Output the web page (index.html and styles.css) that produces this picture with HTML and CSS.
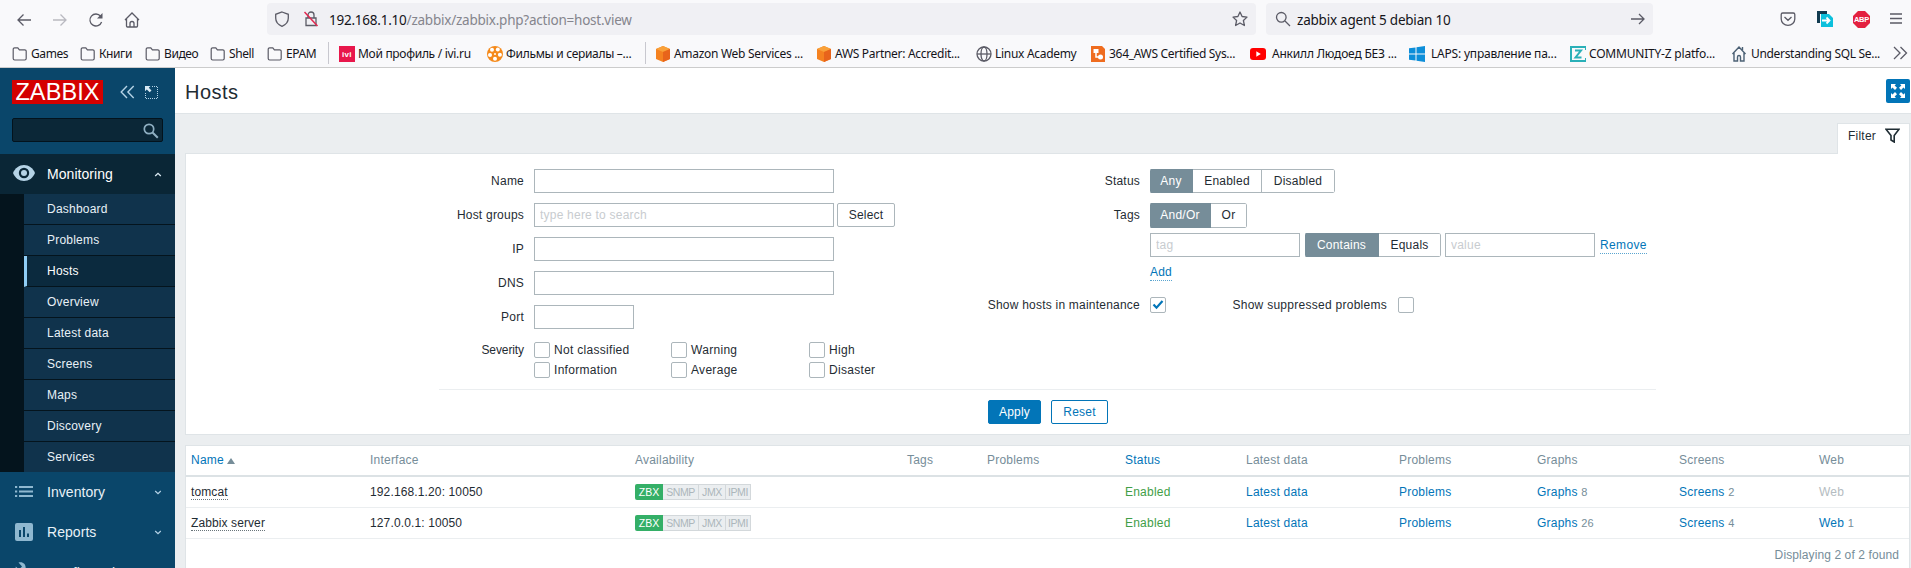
FILE: index.html
```html
<!DOCTYPE html>
<html lang="en">
<head>
<meta charset="utf-8">
<title>Hosts</title>
<link rel="stylesheet" href="styles.css">
</head>
<body>
<svg class="defs" width="0" height="0">
  <symbol id="folder" viewBox="0 0 16 16"><path d="M1.2 12.6V3.2a1.4 1.4 0 0 1 1.4-1.4h3.2l1.6 2h5.4a1.4 1.4 0 0 1 1.4 1.4v7.4a1.4 1.4 0 0 1-1.4 1.4H2.6a1.4 1.4 0 0 1-1.4-1.4z" fill="none" stroke="#5b5b66" stroke-width="1.2"/></symbol>
  <symbol id="cube" viewBox="0 0 16 16"><path d="M8 0l7 3v10l-7 3-7-3V3z" fill="#f58220"/><path d="M8 0l7 3-7 3-7-3z" fill="#f9a13a"/><path d="M8 6l7-3v10l-7 3z" fill="#e8641b"/></symbol>
  <symbol id="down" viewBox="0 0 8 6"><path d="M1.200 2l2.800 2.700L6.800 2" fill="none" stroke="#b5d3e6" stroke-width="1.200"/></symbol>
</svg>
<header class="browser">
  <div class="navbar">
    <div class="nav-icons">
      <svg width="16" height="16" viewBox="0 0 16 16"><path d="M15 8H2M7.5 2.5L2 8l5.500 5.500" class="ln"/></svg>
      <svg width="16" height="16" viewBox="0 0 16 16"><path d="M1 8h13M8.500 2.500L14 8l-5.500 5.500" class="ln dim"/></svg>
      <svg width="16" height="16" viewBox="0 0 16 16"><path d="M13.600 10A6 6 0 1 1 12.600 4.200" class="ln"/><path d="M14.500 1v5.500H9z" fill="#5b5b66"/></svg>
      <svg width="16" height="16" viewBox="0 0 16 16"><path d="M1 8l7-7 7 7M2.500 7v7a1 1 0 0 0 1 1h9a1 1 0 0 0 1-1V7M6 15v-3.500a2 2 0 0 1 4 0V15" class="ln"/></svg>
    </div>
    <div class="urlbar">
      <svg width="16" height="16" viewBox="0 0 16 16"><path d="M8 1l6.300 2.300V7c0 4-3 7-6.300 8.300C4.700 14 1.700 11 1.700 7V3.300z" class="ln"/></svg>
      <svg width="16" height="16" viewBox="0 0 16 16"><path d="M3 7h10v7.500H3zM5 7V4a3 3 0 0 1 6 0v3" class="ln"/><path d="M1.500 1l13 14" stroke="#e22850" stroke-width="1.500"/></svg>
      <span class="url"><b>192.168.1.10</b>/zabbix/zabbix.php?action=host.view</span>
      <svg class="star" width="16" height="16" viewBox="0 0 16 16"><path d="M8 1l2.100 4.500 4.900.6-3.600 3.400 1 5L8 12l-4.400 2.500 1-5L1 6.100l4.900-.6z" class="ln" stroke-linejoin="round"/></svg>
    </div>
    <div class="searchbar">
      <svg width="16" height="16" viewBox="0 0 16 16"><circle cx="6.300" cy="6.300" r="4.800" class="ln"/><path d="M10 10l5 5" class="ln"/></svg>
      <span class="query">zabbix agent 5 debian 10</span>
      <svg class="go" width="16" height="16" viewBox="0 0 16 16"><path d="M1 8h13M9 3l5 5-5 5" class="ln"/></svg>
    </div>
    <div class="tools">
      <svg width="16" height="16" viewBox="0 0 16 16"><path d="M1.200 3.500a1.500 1.500 0 0 1 1.500-1.500h10.600a1.500 1.500 0 0 1 1.500 1.500V8a6.800 6.300 0 0 1-13.600 0zM4.500 6L8 9.300 11.500 6" class="ln"/></svg>
      <svg width="16" height="16" viewBox="0 0 16 16"><path d="M0 0h10v3H3v9H0z" fill="#123b50"/><path d="M4 3h8l4 4v9H4z" fill="#0cc0dc"/><path d="M5 9.500h7M9.500 6.500l3 3-3 3" fill="none" stroke="#fff" stroke-width="1.800"/></svg>
      <svg width="17" height="17" viewBox="0 0 17 17"><path d="M5 0h7l5 5v7l-5 5H5l-5-5V5z" fill="#e3213f"/><text x="8.500" y="11.300" text-anchor="middle" class="abp">ABP</text></svg>
      <svg width="14" height="16" viewBox="0 0 14 16"><path d="M1 3h12M1 7.500h12M1 12h12" class="ln"/></svg>
    </div>
  </div>
  <nav class="bookmarks">
    <a class="bm dir" style="width:68px"><svg><use href="#folder"/></svg>Games</a>
    <a class="bm dir" style="width:65px"><svg><use href="#folder"/></svg>Книги</a>
    <a class="bm dir" style="width:65px"><svg><use href="#folder"/></svg>Видео</a>
    <a class="bm dir" style="width:57px"><svg><use href="#folder"/></svg>Shell</a>
    <a class="bm dir" style="width:61px"><svg><use href="#folder"/></svg>EPAM</a>
    <i class="sep"></i>
    <a class="bm ivibm" style="width:148px"><svg viewBox="0 0 16 16"><path d="M0 0h16v16H0z" fill="#e8174b"/><text x="8" y="10.500" text-anchor="middle" class="ivi">ivi</text></svg>Мой профиль / ivi.ru</a>
    <a class="bm film" style="width:158px"><svg viewBox="0 0 16 16"><circle cx="8" cy="8" r="8" fill="#f58a1b"/><g fill="#fff"><circle cx="5" cy="3.800" r="2"/><circle cx="10.800" cy="3.600" r="2"/><circle cx="3" cy="9" r="2"/><circle cx="12.900" cy="8.700" r="2"/><circle cx="8" cy="12.800" r="2"/><circle cx="8" cy="8" r="1"/></g></svg>Фильмы и сериалы –...</a>
    <i class="sep"></i>
    <a class="bm" style="width:161px"><svg><use href="#cube"/></svg>Amazon Web Services ...</a>
    <a class="bm" style="width:160px"><svg><use href="#cube"/></svg>AWS Partner: Accredit...</a>
    <a class="bm" style="width:114px"><svg viewBox="0 0 16 16"><circle cx="8" cy="8" r="7" class="ln"/><ellipse cx="8" cy="8" rx="3" ry="7" class="ln"/><path d="M1 8h14" class="ln"/></svg>Linux Academy</a>
    <a class="bm loose" style="width:160px"><svg viewBox="0 0 16 16"><path d="M1 0h11l3 3v13H1z" fill="#ef6c1f"/><path d="M3.500 3h5v4h-5z" fill="#fff"/><path d="M6 7v4h3" fill="none" stroke="#fff" stroke-width="1.500"/><circle cx="10.500" cy="11" r="2.500" fill="#fff"/></svg>364_AWS Certified Sys...</a>
    <a class="bm yt" style="width:159px"><svg viewBox="0 0 16 16"><rect y="2" width="16" height="12" rx="3" fill="#f00"/><path d="M6.300 5.200l4.500 2.800-4.500 2.800z" fill="#fff"/></svg>Анкилл Людоед БЕЗ ...</a>
    <a class="bm win" style="width:161px"><svg viewBox="0 0 16 16"><path d="M0 2.300l6.500-.9v6.100H0zM7.500 1.200L16 0v7.500H7.500zM0 8.500h6.500v6.100L0 13.700zM7.500 8.500H16V16l-8.500-1.200z" fill="#0d8ed9"/></svg>LAPS: управление па...</a>
    <a class="bm comm" style="width:161px"><svg viewBox="0 0 16 16"><path d="M16 4V1H1v14h15v-3" fill="none" stroke="#2ab0b8" stroke-width="2"/><path d="M5 4.500h6L5.500 11.500H11.500" fill="none" stroke="#2ab0b8" stroke-width="2"/></svg>COMMUNITY-Z platfo...</a>
    <a class="bm und" style="width:162px"><svg viewBox="0 0 16 16"><path d="M1.500 8L8 1l6.500 7M3 7v8h3.500v-4a1.500 1.500 0 0 1 3 0v4H13V7M11.500 4V1" fill="none" stroke="#4c6175" stroke-width="1.400"/></svg>Understanding SQL Se...</a>
    <svg class="more" width="15" height="14" viewBox="0 0 15 14"><path d="M1 1l6 6-6 6M7.500 1l6 6-6 6" class="ln"/></svg>
  </nav>
</header>

<div class="app">
  <aside class="sidebar">
    <div class="brand">
      <span class="logo">ZABBIX</span>
      <svg class="collapse" width="15" height="14" viewBox="0 0 15 14"><path d="M7 1L1.200 7 7 13M13.700 1L7.900 7l5.800 6" fill="none" stroke="#b5d3e6" stroke-width="1.400"/></svg>
      <svg class="kiosk" width="13" height="13" viewBox="0 0 13 13"><path d="M7 .5h5.500v12H.5V6" fill="none" stroke="#b5d3e6" stroke-dasharray="1 1"/><path d="M0 0h5.500L3.800 1.700 6.500 4.500l-1.800 1.800L1.800 3.500 0 5.300z" fill="#d8e9f4"/></svg>
    </div>
    <div class="side-search"><svg width="16" height="16" viewBox="0 0 16 16"><circle cx="6" cy="6" r="4.700" fill="none" stroke="#8fafc2" stroke-width="1.700"/><path d="M9.500 9.500l5.300 5.300" stroke="#8fafc2" stroke-width="2"/></svg></div>
    <div class="menu-head open">
      <svg class="mi eye" width="22" height="16" viewBox="0 0 22 16"><path d="M0 8C2 3 6.200 0 11 0s9 3 11 8c-2 5-6.200 8-11 8S2 13 0 8z" fill="#b5d3e6"/><circle cx="11" cy="8" r="5.200" fill="#0a2636"/><circle cx="11" cy="8" r="3" fill="#b5d3e6"/></svg>
      <span>Monitoring</span>
      <svg class="chev" width="8" height="6" viewBox="0 0 8 6"><path d="M1.200 5L4 2.300 6.800 5" fill="none" stroke="#dcebf5" stroke-width="1.300"/></svg>
    </div>
    <ul class="submenu">
      <li>Dashboard</li><li>Problems</li><li class="active">Hosts</li><li>Overview</li><li>Latest data</li><li>Screens</li><li>Maps</li><li>Discovery</li><li>Services</li>
    </ul>
    <div class="menu-head"><svg class="mi" width="18" height="18" viewBox="0 0 18 18"><path d="M0 4h2.200M4 4h14M0 8.500h2.200M4 8.500h14M0 13h2.200M4 13h14" stroke="#8fb8d0" stroke-width="1.900"/></svg><span>Inventory</span><svg class="chev" width="8" height="6"><use href="#down"/></svg></div>
    <div class="menu-head"><svg class="mi" width="18" height="18" viewBox="0 0 18 18"><rect width="18" height="18" rx="2" fill="#8fb8d0"/><path d="M5 7v7M9 4v10M13 10.500V14" stroke="#0a466a" stroke-width="2"/></svg><span>Reports</span><svg class="chev" width="8" height="6"><use href="#down"/></svg></div>
    <div class="menu-head last"><svg class="mi" width="18" height="20" viewBox="0 0 18 20"><path d="M3.500.5c4.500-1.500 8 2 7 6.500L18 15l-3 3-7.500-8C3 11 0 8 .8 4.500l3.200 3L7 4.500z" fill="#8fb8d0"/></svg><span>Configuration</span><svg class="chev" width="8" height="6"><use href="#down"/></svg></div>
  </aside>

  <main class="main">
    <div class="title-row">
      <h1>Hosts</h1>
      <button class="fullscreen"><svg width="14" height="14" viewBox="0 0 14 14"><path d="M0 0h5L3.600 1.400 6 3.800 4 6 1.500 3.500 0 5zM14 0v5l-1.500-1.500L10 6 8 3.800l2.400-2.400L9 0zM0 14V9l1.500 1.500L4 8l2 2.200-2.400 2.400L5 14zM14 14H9l1.400-1.400L8 10.200 10 8l2.500 2.500L14 9z" fill="#fff"/></svg></button>
    </div>
    <div class="content">
      <div class="tabs"><div class="tab">Filter<svg width="15" height="15" viewBox="0 0 15 15"><path d="M1 1.200h13L9.200 7.500V14L6 12V7.500z" fill="none" stroke="#1f2c33" stroke-width="1.600"/></svg></div></div>
      <section class="filter">
        <div class="fields">
          <div class="col-left">
            <div class="row"><label>Name</label><input class="w300"></div>
            <div class="row"><label>Host groups</label><input class="w300" placeholder="type here to search"><button class="btn select">Select</button></div>
            <div class="row"><label>IP</label><input class="w300"></div>
            <div class="row"><label>DNS</label><input class="w300"></div>
            <div class="row"><label>Port</label><input class="w100"></div>
            <div class="row sev"><label>Severity</label>
              <div class="checks">
                <span><i class="cb"></i>Not classified</span><span><i class="cb"></i>Warning</span><span><i class="cb"></i>High</span>
                <span><i class="cb"></i>Information</span><span><i class="cb"></i>Average</span><span><i class="cb"></i>Disaster</span>
              </div>
            </div>
          </div>
          <div class="col-right">
            <div class="row"><label>Status</label><div class="seg"><b style="width:43px">Any</b><span style="width:69px">Enabled</span><span style="width:73px">Disabled</span></div></div>
            <div class="row tags"><label>Tags</label><div class="seg tall"><b style="width:61px">And/Or</b><span style="width:36px">Or</span></div></div>
            <div class="row tagline"><label></label><input class="w150" placeholder="tag"><div class="seg op"><b style="width:74px">Contains</b><span style="width:62px">Equals</span></div><input class="w150" placeholder="value"><a class="dot">Remove</a></div>
            <div class="row addline"><label></label><a class="dot">Add</a></div>
            <div class="row maint"><label>Show hosts in maintenance</label><i class="cb"><svg width="12" height="10" viewBox="0 0 12 10"><path d="M1.500 4.500l3 3.200L10.500 1" fill="none" stroke="#0275b8" stroke-width="2.200"/></svg></i><span class="supp">Show suppressed problems</span><i class="cb"></i></div>
          </div>
        </div>
        <div class="actions"><button class="btn apply">Apply</button><button class="btn reset">Reset</button></div>
      </section>
      <section class="hosts">
        <div class="tr th"><span class="blue">Name <i class="asc"></i></span><span>Interface</span><span>Availability</span><span>Tags</span><span>Problems</span><span class="blue">Status</span><span>Latest data</span><span>Problems</span><span>Graphs</span><span>Screens</span><span>Web</span></div>
        <div class="tr"><span><a class="host">tomcat</a></span><span class="ip">192.168.1.20: 10050</span><span class="avail"><b>ZBX</b><i class="a2">SNMP</i><i class="a3">JMX</i><i class="a4">IPMI</i></span><span></span><span></span><span class="green">Enabled</span><span class="blue">Latest data</span><span class="blue">Problems</span><span class="blue">Graphs <em>8</em></span><span class="blue">Screens <em>2</em></span><span class="off">Web</span></div>
        <div class="tr"><span><a class="host">Zabbix server</a></span><span class="ip">127.0.0.1: 10050</span><span class="avail"><b>ZBX</b><i class="a2">SNMP</i><i class="a3">JMX</i><i class="a4">IPMI</i></span><span></span><span></span><span class="green">Enabled</span><span class="blue">Latest data</span><span class="blue">Problems</span><span class="blue">Graphs <em>26</em></span><span class="blue">Screens <em>4</em></span><span class="blue">Web <em>1</em></span></div>
        <div class="found">Displaying 2 of 2 found</div>
      </section>
    </div>
  </main>
</div>
</body>
</html>
```
FILE: styles.css
```css
* { box-sizing: border-box; }
html, body { margin: 0; height: 568px; overflow: hidden; }
body { font: 12px/16px "Liberation Sans", Arial, sans-serif; letter-spacing: .22px; color: #1f2c33; background: #ebeef0; }
.defs { display: none; }
svg { flex: none; }
.ln { fill: none; stroke: #5b5b66; stroke-width: 1.3; }
.dim { stroke: #b9b9c0; }

/* Browser chrome */
.browser { height: 68px; background: #f9f9fb; border-bottom: 1px solid #ccc; font-family: "Noto Sans", "Open Sans", sans-serif; color: #15141a; }
.navbar { display: flex; height: 39px; align-items: flex-start; padding-top: 3px; }
.nav-icons { display: flex; gap: 20px; padding: 9px 0 0 16px; width: 267px; }
.urlbar { display: flex; align-items: center; width: 989px; height: 32px; background: #f0f0f4; border-radius: 4px; padding: 0 8px 0 7px; gap: 13px; }
.url { font-size: 13.500px; letter-spacing: -.23px; color: #85858d; margin: 2px 0 0 -3px; white-space: nowrap; }
.url b { font-weight: 400; color: #15141a; }
.star { margin-left: auto; }
.searchbar { display: flex; align-items: center; width: 387px; height: 32px; margin-left: 10px; background: #f0f0f4; border-radius: 4px; padding: 0 7px 0 9px; }
.query { font-size: 13.500px; letter-spacing: -.22px; margin: 2px 0 0 6px; white-space: nowrap; }
.go { margin-left: auto; }
.tools { display: flex; align-items: center; height: 32px; gap: 20px; margin-left: 127px; }
.tools svg:nth-child(2) { margin-left: 1px; }
.tools svg:nth-child(4) { margin-left: -1px; }
.abp { font: 700 7.500px "Liberation Sans", sans-serif; fill: #fff; letter-spacing: -.2px; }
.ivi { font: 700 8px "Liberation Sans", sans-serif; fill: #fff; letter-spacing: .3px; }
.bookmarks { display: flex; align-items: center; height: 28px; padding-left: 12px; }
.bm { display: flex; align-items: center; flex: none; gap: 4px; font-size: 12px; letter-spacing: -.3px; white-space: nowrap; padding-top: 1px; }
.bm svg { width: 16px; height: 16px; margin-right: -1px; }
.dir { letter-spacing: -.4px; }
.yt, .win { letter-spacing: -.2px; }
.yt svg, .win svg { margin-right: 2px; }
.comm { letter-spacing: -.2px; }
.und { letter-spacing: -.32px; }
.und svg { margin-right: 0; }
.sep { width: 1px; height: 22px; background: #c8c8cf; flex: none; margin-right: 9px; }
.sep + .ivibm { margin-left: 1px; }

/* Sidebar */
.app { display: flex; height: 500px; }
.sidebar { width: 175px; flex: none; background: #0a466a; color: #e8f1f7; overflow: hidden; }
.brand { display: flex; height: 50px; padding: 12px 0 0 12px; }
.logo { width: 91px; height: 24px; background: #d40000; color: #fff; font-size: 23.500px; line-height: 25px; letter-spacing: .1px; text-align: center; }
.collapse { margin: 5px 0 0 17px; }
.kiosk { margin: 6px 0 0 10px; }
.side-search { width: 151px; height: 24px; margin-left: 12px; background: #0b2737; border: 1px solid #03131d; border-radius: 2px; display: flex; justify-content: flex-end; padding: 4px 3px 0 0; }
.menu-head { display: flex; align-items: center; height: 40px; padding: 0 13px 0 15px; font-size: 14px; letter-spacing: .05px; }
.menu-head span { margin-left: 14px; }
.menu-head .chev { margin-left: auto; }
.menu-head.open { margin-top: 12px; background: #0a2636; color: #fff; padding-left: 13px; }
.menu-head.open span { margin-left: 12px; }
.menu-head.last span { padding-top: 2px; }
.mi.eye { margin-top: -3px; }
.submenu { list-style: none; margin: 0; padding: 0 0 0 24px; background: #04141d; }
.submenu li { height: 31px; line-height: 30px; padding-left: 23px; background: #10334c; border-bottom: 1px solid #04141d; }
.submenu li:last-child { height: 30px; border-bottom: 0; }
.submenu li.active { background: #0b2a3e; border-left: 3px solid #8fcdf5; padding-left: 20px; color: #fff; }

/* Page */
.main { flex: 1; min-width: 0; display: flex; flex-direction: column; }
.title-row { display: flex; justify-content: space-between; height: 46px; background: #fff; border-bottom: 1px solid #dfe4e7; padding: 11px 1px 0 10px; }
h1 { margin: 0; font-size: 20px; line-height: 27px; font-weight: 400; letter-spacing: .5px; }
.fullscreen { width: 24px; height: 24px; padding: 0; border: 0; border-radius: 2px; background: #0275b8; display: flex; align-items: center; justify-content: center; }
.content { flex: 1; display: flex; flex-direction: column; padding: 9px 1px 0 10px; }
.tabs { display: flex; justify-content: flex-end; height: 30px; }
.tab { display: flex; width: 73px; height: 31px; position: relative; background: #fff; border: 1px solid #dfe4e7; border-bottom: 0; padding: 4px 0 0 10px; gap: 9px; }
.filter { height: 282px; background: #fff; border: 1px solid #dfe4e7; }
.fields { display: flex; height: 236px; width: 1217px; margin-left: 253px; padding-top: 15px; border-bottom: 1px solid #ebeef0; }
.row { display: flex; height: 24px; margin-bottom: 10px; align-items: center; white-space: nowrap; }
.col-left { width: 548px; }
.col-left label { width: 85px; margin-right: 10px; text-align: right; flex: none; }
.col-right label { width: 153px; margin-right: 10px; text-align: right; flex: none; }
input { height: 24px; border: 1px solid #acb6bb; background: #fff; padding: 0 5px; font: inherit; letter-spacing: inherit; border-radius: 0; }
input::placeholder { color: #c8cccf; opacity: 1; }
.w300 { width: 300px; } .w100 { width: 100px; } .w150 { width: 150px; }
.btn { height: 24px; border: 1px solid #acb6bb; border-radius: 2px; background: #fff; font: inherit; letter-spacing: inherit; color: #1f2c33; padding: 0; }
.select { width: 58px; margin-left: 3px; }
.row.sev { align-items: flex-start; margin-top: -7px; padding-top: 10px; height: auto; }
.sev label { letter-spacing: -.1px; line-height: 17px; }
.checks { display: grid; grid-template-columns: 137px 138px 100px; row-gap: 4px; letter-spacing: .3px; }
.checks span { display: flex; gap: 4px; height: 16px; line-height: 17px; }
.cb { width: 16px; height: 16px; border: 1px solid #acb6bb; border-radius: 2px; background: #fff; flex: none; display: flex; align-items: center; justify-content: center; }
.seg { display: flex; height: 24px; flex: none; border-radius: 2px; overflow: hidden; }
.seg b, .seg span { display: flex; align-items: center; justify-content: center; font-weight: 400; border: 1px solid #acb6bb; border-left: 0; }
.seg b { background: #768d99; border-color: #768d99; color: #fff; }
.seg.tall { height: 25px; }
.seg span:last-child { border-radius: 0 2px 2px 0; }
.row.tags { margin-bottom: 6px; }
.row.tagline { margin-bottom: 3px; }
.op { margin: 0 4px 0 5px; }
.dot { color: #0275b8; border-bottom: 1px dotted #5aa5d0; line-height: 15px; margin-top: 1px; }
.tagline .dot { margin-left: 5px; letter-spacing: .35px; }
.row.addline { margin-bottom: 9px; }
.row.maint { margin-bottom: 0; }
.supp { width: 221px; margin-right: 11px; text-align: right; letter-spacing: .27px; }
.actions { display: flex; gap: 10px; padding: 10px 0 0 802px; }
.apply { width: 53px; background: #0275b8; border-color: #0275b8; color: #fff; }
.reset { width: 57px; border-color: #0275b8; color: #0275b8; }

/* Hosts table */
.hosts { flex: 1; margin-top: 10px; background: #fff; border: 1px solid #dfe4e7; border-bottom: 0; }
.tr { display: grid; grid-template-columns: 179px 265px 272px 80px 138px 121px 153px 138px 142px 140px 1fr; height: 31px; line-height: 30px; padding-left: 5px; border-bottom: 1px solid #ebeef0; white-space: nowrap; }
.tr.th { border-bottom: 2px solid #dce2e5; line-height: 28px; color: #768d99; }
.tr .blue { color: #0275b8; }
.green { color: #429e47; }
.tr .off { color: #b4bcc1; }
.tr em { font-style: normal; font-size: 11px; color: #768d99; }
.tr .ip { letter-spacing: .13px; }
.host { border-bottom: 1px dotted #6a757b; letter-spacing: .1px; }
.asc { display: inline-block; border: 4px solid transparent; border-top: 0; border-bottom: 6px solid #768d99; }
.avail { display: flex; padding-top: 7px; font-size: 10.500px; letter-spacing: -.4px; }
.avail b, .avail i { height: 16px; line-height: 16px; text-align: center; font-style: normal; font-weight: 400; }
.avail b { width: 28px; background: #34af67; color: #fff; border-radius: 2px 0 0 2px; letter-spacing: 0; }
.avail i { background: #ebeef0; color: #acb6bb; border: 1px solid #d3d8db; border-left: 0; line-height: 15px; }
.avail .a2 { width: 36px; } .avail .a3 { width: 27px; } .avail .a4 { width: 25px; }
.found { text-align: right; color: #768d99; padding: 8px 10px 0 0; letter-spacing: .1px; }
```
